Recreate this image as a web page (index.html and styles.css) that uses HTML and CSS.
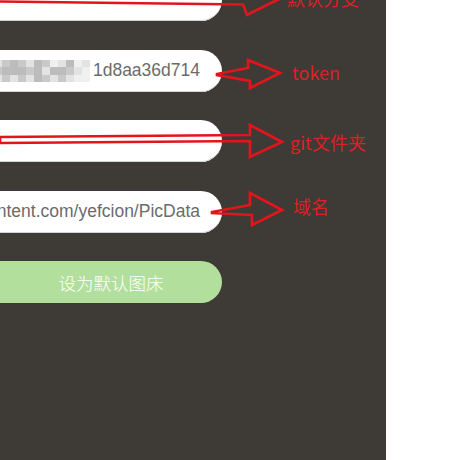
FILE: index.html
```html
<!DOCTYPE html>
<html lang="zh">
<head>
<meta charset="utf-8">
<title>图床设置</title>
<link rel="stylesheet" href="styles.css">
</head>
<body>
<div class="panel">
  <div class="form">
    <div class="field"></div>
    <div class="field">
      <span class="mosaic">
        <i class="c1"></i><i class="c2"></i><i class="c3"></i><i class="c2"></i><i class="c1"></i><i class="c3"></i><i class="c2"></i><i class="c4"></i><i class="c1"></i><i class="c3"></i><i class="c4"></i><i class="c1"></i>
        <i class="c2"></i><i class="c3"></i><i class="c3"></i><i class="c3"></i><i class="c2"></i><i class="c3"></i><i class="c1"></i><i class="c3"></i><i class="c3"></i><i class="c2"></i><i class="c1"></i><i class="c4"></i>
        <i class="c1"></i><i class="c2"></i><i class="c1"></i><i class="c2"></i><i class="c1"></i><i class="c3"></i><i class="c2"></i><i class="c1"></i><i class="c2"></i><i class="c1"></i><i class="c4"></i><i class="c4"></i>
      </span>
      <span class="val">1d8aa36d714</span>
    </div>
    <div class="field"></div>
    <div class="field"><span class="val">githubusercontent.com/yefcion/PicData</span></div>
    <div class="btn">设为默认图床</div>
  </div>
  <svg class="annot" width="386" height="460" viewBox="0 0 386 460">
    <g class="arrow">
      <polyline points="0,1.5 243,4.5 247,15 279,-1"/>
      <polygon points="217,74 248,68 248,60 280,73 250,88 250,81 217,75"/>
      <polygon points="0,137 250,135 250,125 282,142 250,157 250,141 0,143"/>
      <polygon points="212,212 250,205 250,193 282,210 252,225 252,215 212,213"/>
    </g>
    <text class="label" x="287" y="6">默认分支</text>
    <text class="label" x="292" y="80">token</text>
    <text class="label" x="290" y="150">git文件夹</text>
    <text class="label" x="293" y="214">域名</text>
  </svg>
</div>
</body>
</html>
```
FILE: styles.css
```css
html, body {
  margin: 0;
  padding: 0;
  background: #ffffff;
}

.panel {
  position: relative;
  width: 386px;
  height: 460px;
  background: #3e3a35;
  overflow: hidden;
  font-family: "Liberation Sans", "Noto Sans CJK SC", sans-serif;
}

.form {
  display: flex;
  flex-direction: column;
  gap: 28.5px;
  width: 262px;
  margin-top: -21px;
  margin-left: -40px;
}

.field {
  height: 42px;
  box-sizing: border-box;
  border-radius: 21px;
  background: #ffffff;
  box-shadow: inset 0 -1px 0 #d4d4d8;
  display: flex;
  align-items: center;
  justify-content: flex-end;
  padding-right: 22px;
  overflow: hidden;
  white-space: nowrap;
  color: #6b6b6b;
  font-size: 17.5px;
}

.val {
  flex: none;
}

.mosaic {
  flex: none;
  display: grid;
  grid-template-columns: repeat(12, 8px);
  grid-auto-rows: 7.5px;
  margin-right: 3px;
  margin-top: 1px;
}

.mosaic i { display: block; }
.mosaic .c1 { background: #e3e3e3; }
.mosaic .c2 { background: #c9c9c9; }
.mosaic .c3 { background: #bcbcbc; }
.mosaic .c4 { background: #f0f0f0; }

.btn {
  height: 42px;
  box-sizing: border-box;
  border-radius: 21px;
  background: #b3df9d;
  color: #ffffff;
  display: flex;
  align-items: center;
  justify-content: center;
  padding-left: 40px;
  font-family: "Noto Sans CJK SC", sans-serif;
  font-size: 17.5px;
  font-weight: 300;
}

.annot {
  position: absolute;
  left: 0;
  top: 0;
  pointer-events: none;
}

.arrow polyline,
.arrow polygon {
  fill: none;
  stroke: #e3141c;
  stroke-width: 2.7;
  stroke-linejoin: miter;
}

.label {
  fill: #dc2026;
  font-family: "Noto Sans CJK SC", sans-serif;
  font-size: 18px;
}
```
